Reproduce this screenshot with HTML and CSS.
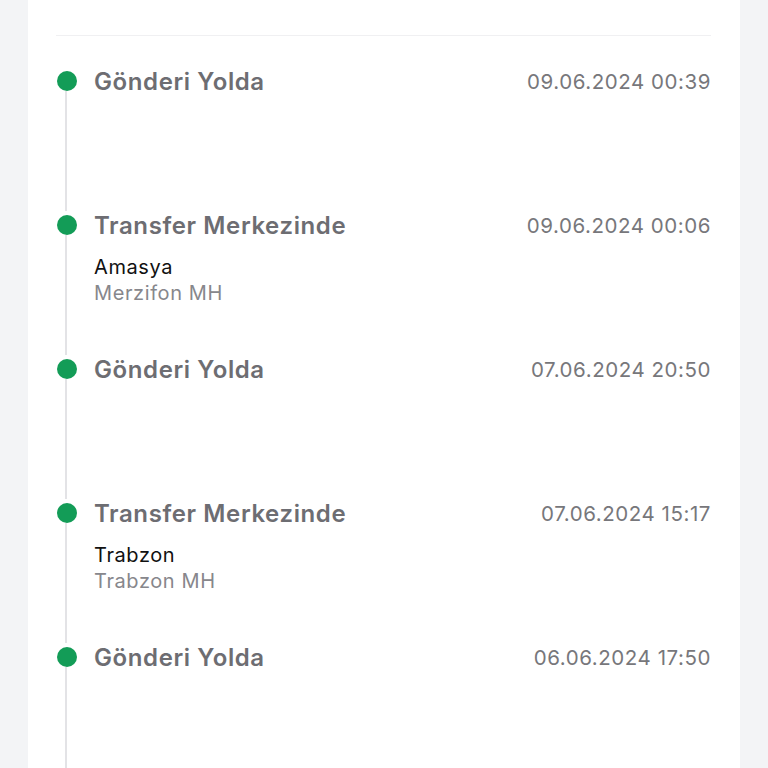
FILE: index.html
```html
<!DOCTYPE html>
<html lang="tr">
<head>
    <meta charset="utf-8">
    <title>Gönderi Takibi</title>
    <link rel="stylesheet" href="styles.css">
</head>
<body>
    <div class="card">
        <div class="card-top"></div>
        <ul class="timeline">
            <li class="event">
                <div class="marker"><span class="dot"></span><span class="line"></span></div>
                <div class="event-body">
                    <div class="event-head">
                        <span class="event-title">Gönderi Yolda</span>
                        <span class="event-date">09.06.2024 00:39</span>
                    </div>
                </div>
            </li>
            <li class="event">
                <div class="marker"><span class="dot"></span><span class="line"></span></div>
                <div class="event-body">
                    <div class="event-head">
                        <span class="event-title">Transfer Merkezinde</span>
                        <span class="event-date">09.06.2024 00:06</span>
                    </div>
                    <div class="event-place">
                        <div class="city">Amasya</div>
                        <div class="branch">Merzifon MH</div>
                    </div>
                </div>
            </li>
            <li class="event">
                <div class="marker"><span class="dot"></span><span class="line"></span></div>
                <div class="event-body">
                    <div class="event-head">
                        <span class="event-title">Gönderi Yolda</span>
                        <span class="event-date">07.06.2024 20:50</span>
                    </div>
                </div>
            </li>
            <li class="event">
                <div class="marker"><span class="dot"></span><span class="line"></span></div>
                <div class="event-body">
                    <div class="event-head">
                        <span class="event-title">Transfer Merkezinde</span>
                        <span class="event-date">07.06.2024 15:17</span>
                    </div>
                    <div class="event-place">
                        <div class="city">Trabzon</div>
                        <div class="branch">Trabzon MH</div>
                    </div>
                </div>
            </li>
            <li class="event">
                <div class="marker"><span class="dot"></span><span class="line"></span></div>
                <div class="event-body">
                    <div class="event-head">
                        <span class="event-title">Gönderi Yolda</span>
                        <span class="event-date">06.06.2024 17:50</span>
                    </div>
                </div>
            </li>
        </ul>
    </div>
</body>
</html>
```

FILE: styles.css
```css
body {
    margin: 0;
    padding: 0;
    background-color: #f3f4f6;
    font-family: Inter, "Noto Sans", Arial, sans-serif;
}

.card {
    margin: 0 28px;
    height: 768px;
    background-color: #ffffff;
    padding: 0 29px 0 28px;
    box-sizing: border-box;
    overflow: hidden;
}

.card-top {
    height: 35px;
    border-bottom: 1px solid #f0f0f2;
}

.timeline {
    list-style: none;
    margin: 0;
    padding: 31px 0 0 0;
}

.event {
    display: flex;
    height: 144px;
}

.marker {
    width: 22px;
    display: flex;
    flex-direction: column;
    align-items: center;
    flex-shrink: 0;
    padding-top: 4px;
}

.dot {
    width: 20px;
    height: 20px;
    border-radius: 50%;
    background-color: #139c57;
    flex-shrink: 0;
}

.line {
    width: 2px;
    flex: 1;
    background-color: #e3e3e6;
    margin-right: 2px;
}

.event-body {
    flex: 1;
    padding-left: 16px;
}

.event-head {
    display: flex;
    justify-content: space-between;
    align-items: center;
    height: 28px;
}

.event-title {
    font-size: 24px;
    font-weight: 600;
    color: #6d6d72;
    letter-spacing: 0.6px;
}

.event-date {
    font-size: 20.5px;
    color: #77777b;
    letter-spacing: 0.55px;
}

.event-place {
    margin-top: 15px;
    font-size: 20px;
    line-height: 26px;
    letter-spacing: 0.6px;
}

.city {
    color: #111111;
}

.branch {
    color: #87878c;
}
```
